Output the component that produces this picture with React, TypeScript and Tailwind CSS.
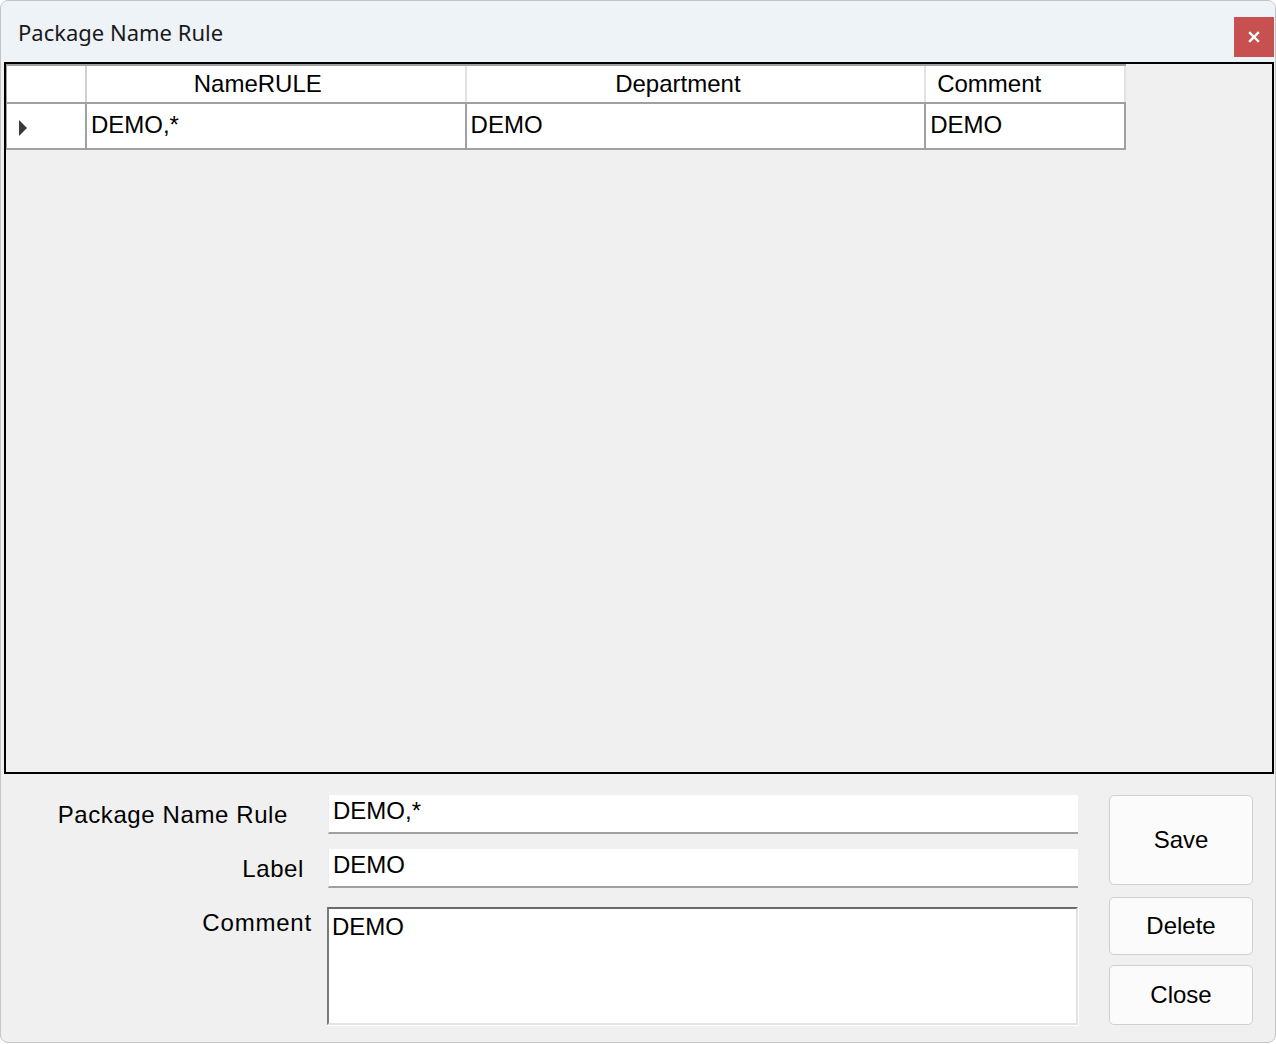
import React from "react";

const cellFont = "font-['Liberation_Sans',Arial,sans-serif] text-[24px] text-black";

function HeaderCell({ w, children, className = "" }: { w: string; children?: React.ReactNode; className?: string }) {
  return (
    <div className={`${w} h-full bg-white border-r-2 border-[#e3e3e3] flex items-center ${className}`}>
      {children}
    </div>
  );
}

function DataCell({ w, children }: { w: string; children?: React.ReactNode }) {
  return (
    <div className={`${w} h-full bg-white border-r-2 border-[#a0a0a0] flex items-center pl-[4px] pb-[2px]`}>
      <span className={cellFont}>{children}</span>
    </div>
  );
}

function Button({ h, label }: { h: string; label: string }) {
  return (
    <button
      className={`w-[144px] ${h} rounded-[5px] border border-[#cfcfcf] bg-[#fbfbfb] flex items-center justify-center ${cellFont}`}
    >
      {label}
    </button>
  );
}

export default function App() {
  return (
    <div className="w-[1276px] h-[1044px] bg-white overflow-hidden">
      <div className="w-[1276px] h-[1043px] border border-[#c4c4c4] rounded-[8px] bg-[#f0f0f0] overflow-hidden flex flex-col">
        {/* title bar */}
        <div className="h-[61px] shrink-0 bg-[#eef3f8] flex items-start justify-between">
          <div className="pl-[17px] pt-[15px] font-['Noto_Sans',sans-serif] text-[22px] text-[#1a1a1a]">
            Package Name Rule
          </div>
          <div className="mt-[16px] mr-[1px] w-[40px] h-[40px] bg-[#c75050] flex items-center justify-center">
            <svg width="12" height="12" viewBox="0 0 12 12">
              <path d="M2 2 L10 10 M10 2 L2 10" stroke="white" strokeWidth="2.4" strokeLinecap="square" />
            </svg>
          </div>
        </div>

        {/* data grid */}
        <div className="ml-[3px] mr-[1px] h-[712px] shrink-0 border-2 border-black bg-[#f0f0f0]">
          <div className="w-[1120px] border-t-2 border-[#a0a0a0]">
            <div className="h-[36px] flex">
              <HeaderCell w="w-[81px]" className="border-l border-l-[#a0a0a0] border-r-[#d0d0d0]" />
              <HeaderCell w="w-[380px]" className="justify-center pr-[36px]">
                <span className={cellFont}>NameRULE</span>
              </HeaderCell>
              <HeaderCell w="w-[460px]" className="justify-center pr-[35px]">
                <span className={cellFont}>Department</span>
              </HeaderCell>
              <HeaderCell w="w-[200px]" className="pl-[11px]">
                <span className={cellFont}>Comment</span>
              </HeaderCell>
            </div>
            <div className="h-[48px] flex border-y-2 border-[#a0a0a0]">
              <div className="w-[81px] h-full bg-white border-l border-l-[#a0a0a0] border-r-2 border-[#a0a0a0] flex items-center pl-[11px] pt-[4px]">
                <svg width="10" height="18" viewBox="0 0 10 18">
                  <path d="M1 1 L9 9 L1 17 Z" fill="#3a3a3a" />
                </svg>
              </div>
              <DataCell w="w-[380px]">DEMO,*</DataCell>
              <DataCell w="w-[460px]">DEMO</DataCell>
              <DataCell w="w-[200px]">DEMO</DataCell>
            </div>
          </div>
        </div>

        {/* edit form */}
        <div className="flex pt-[21px]">
          <div className="w-[1078px] flex flex-col">
            <div className="h-[39px] flex items-center">
              <div className={`w-[327px] text-right pr-[40px] pt-[0px] tracking-[0.6px] ${cellFont}`}>Package Name Rule</div>
              <div className="w-[750px] h-full bg-white border-b-2 border-[#a0a0a0] border-l border-l-[#ececec] pl-[4px] pt-[2px]">
                <span className={`${cellFont} leading-[28px]`}>DEMO,*</span>
              </div>
            </div>
            <div className="h-[39px] mt-[15px] flex items-center">
              <div className={`w-[327px] text-right pr-[24px] pt-[0px] tracking-[0.6px] ${cellFont}`}>Label</div>
              <div className="w-[750px] h-full bg-white border-b-2 border-[#a0a0a0] border-l border-l-[#ececec] pl-[4px] pt-[2px]">
                <span className={`${cellFont} leading-[28px]`}>DEMO</span>
              </div>
            </div>
            <div className="h-[119px] mt-[19px] flex items-start">
              <div className={`w-[326px] text-right pr-[15px] -mt-[2px] tracking-[0.8px] ${cellFont}`}>Comment</div>
              <div className="w-[752px] h-full bg-white border-r border-b border-white">
                <div className="w-full h-full border-t-2 border-l-2 border-t-[#6a6a6a] border-l-[#7a7a7a] border-r-2 border-b-2 border-r-[#e3e3e3] border-b-[#e3e3e3] pl-[3px] pt-[4px]">
                  <span className={`${cellFont} leading-[28px]`}>DEMO</span>
                </div>
              </div>
            </div>
          </div>
          <div className="ml-[30px] flex flex-col">
            <Button h="h-[90px]" label="Save" />
            <div className="mt-[12px]">
              <Button h="h-[58px]" label="Delete" />
            </div>
            <div className="mt-[10px]">
              <Button h="h-[60px]" label="Close" />
            </div>
          </div>
        </div>
      </div>
    </div>
  );
}
